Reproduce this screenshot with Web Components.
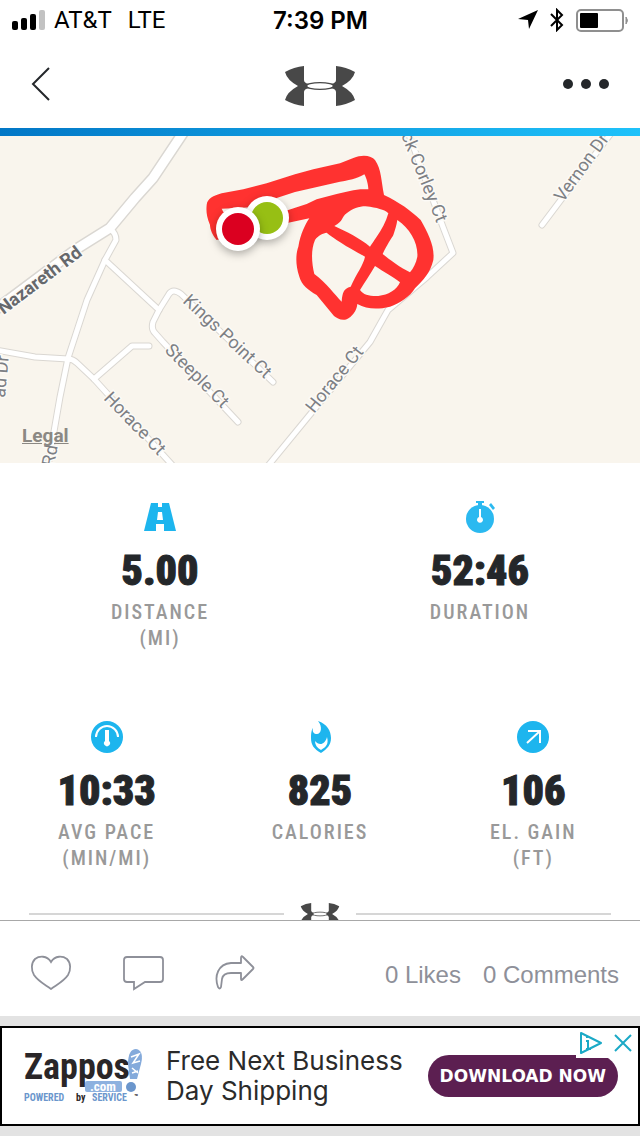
<!DOCTYPE html>
<html lang="en">
<head>
<meta charset="utf-8">
<meta name="viewport" content="width=device-width, initial-scale=1">
<title>Workout</title>
<style>
  body {
    margin: 0;
    background: #E3E3E3;
    color: #24272A;
    font-family: Roboto, 'Liberation Sans', sans-serif;
  }
</style>
</head>
<body>
<workout-screen></workout-screen>

<script>
const ICONS = {
  back: ['0 0 20 36', `<path d="M18 2 2 18l16 16" fill="none" stroke="#24272A" stroke-width="2"/>`],
  more: ['0 0 46 10', `<g fill="#24272A"><circle cx="5" cy="5" r="5"/><circle cx="23" cy="5" r="5"/><circle cx="41" cy="5" r="5"/></g>`],
  brand: ['0 0 70 40', `
    <g fill="#484848">
      <path d="M0 6Q9 1 19 0V14Q19 17 24 18L22 20 24 22Q19 23 19 26V40Q9 39 0 34Q2 26 13 20Q2 14 0 6Z"/>
      <path d="M70 6Q61 1 51 0V14Q51 17 46 18L48 20 46 22Q51 23 51 26V40Q61 39 70 34Q68 26 57 20Q68 14 70 6Z"/>
    </g>
    <ellipse cx="35" cy="20" rx="14" ry="3.4" fill="none" stroke="#484848" stroke-width="1.4"/>`],
  signal: ['0 0 34 20', `<rect y="11" width="6" height="9" rx="2"/><rect x="9" y="8" width="6" height="12" rx="2"/><rect x="18" y="4" width="6" height="16" rx="2"/><rect x="27" width="6" height="20" rx="2" fill="#C2C2C2"/>`],
  location: ['0 0 20 20', `<path d="M20 0 11 19 10 10 0 9Z"/>`],
  bluetooth: ['0 0 14 24', `<path d="M1 6 12 17 7 22V2l5 5L1 18" fill="none" stroke="#000" stroke-width="2"/>`],
  battery: ['0 0 53 23', `<rect x="1" y="1" width="46" height="21" rx="4" fill="none" stroke="#8F8F8F" stroke-width="2"/><rect x="4" y="4" width="18" height="15" rx="1"/><path d="M50 8q3 3.500 0 7z" fill="#8F8F8F" stroke="#8F8F8F"/>`],
  distance: ['0 0 32 32', `<path d="M7 2H14V6H18V2H25L32 30H20V23H12V30H0ZM14 11 13 19H19L18 11Z" fill="#1DB5EE" fill-rule="evenodd"/>`],
  duration: ['0 0 32 32', `
    <g fill="#2BB9F0"><circle cx="16" cy="18" r="14"/><rect x="12" width="8" height="2"/><rect x="14" y="1" width="4" height="5"/><path d="M25 4 27 2 31 7 29 9Z"/></g>
    <path d="M15 8h2v8a3 3 0 1 1-2 0z" fill="#fff"/>`],
  pace: ['0 0 32 32', `<circle cx="16" cy="16" r="16" fill="#1DB5EE"/><path d="M5 16a11 11 0 0 1 22 0" fill="none" stroke="#fff" stroke-width="2"/><path d="M14 9h4v11a3 3 0 1 1-4 0z" fill="#fff"/>`],
  calories: ['0 0 32 32', `
    <path d="M14 0C23 3 27 10 27 17C27 24 23 28 17 32C10 28 7 24 7 17C7 11 8 8 9 7C8 11 10 13 13 13C17 13 19 6 14 0Z" fill="#1DB5EE"/>
    <path d="M11 20C15 25 21 24 23 16C25 23 22 26 17 29C13 27 11 24 11 20Z" fill="#fff"/>`],
  gain: ['0 0 32 32', `<circle cx="16" cy="16" r="16" fill="#1DB5EE"/><path d="M10 22 23 10M11 10H23V22" fill="none" stroke="#fff" stroke-width="2"/>`],
  like: ['0 0 42 36', `<path d="M21 7C17 0 9 1 5 4C1 8 1 15 4 20C8 26 14 29 21 34C28 29 34 26 38 20C41 15 41 8 37 4C33 1 25 0 21 7Z" fill="none" stroke="#8E9099" stroke-width="1.800"/>`],
  comment: ['0 0 42 36', `<path d="M5 2H38Q41 2 41 5V24Q41 27 38 27H23L12 34V27H5Q2 27 2 24V5Q2 2 5 2Z" fill="none" stroke="#8E9099" stroke-width="1.800"/>`],
  share: ['0 0 42 36', `<path d="M27 3Q27 0 29 2L39 12Q40 13 39 14L29 24Q27 26 27 24V18H17Q9 18 8 24L7 32Q6 35 4 32C0 21 4 9 17 8H27Z" fill="none" stroke="#8E9099" stroke-width="1.800" stroke-linejoin="round"/>`],
  adchoices: ['0 0 24 24', `<path d="M2 2 22 12 2 22Z" fill="none" stroke="#1BA9C6" stroke-width="2" stroke-linejoin="round"/><path d="M7 10h2v8M7 18h5M8 5v2" fill="none" stroke="#1BA9C6" stroke-width="2"/>`],
  close: ['0 0 20 20', `<path d="M2 2 18 18M18 2 2 18" fill="none" stroke="#1BA9C6" stroke-width="2"/>`],
}

class AppIcon extends HTMLElement {
  connectedCallback() {
    const [box, art] = ICONS[this.getAttribute('name')]
    this.attachShadow({ mode: 'open' }).innerHTML = `
      <style>
        :host { display: inline-block; flex: none; }
        svg { display: block; width: 100%; height: 100%; }
      </style>
      <svg viewBox="${box}" aria-hidden="true">${art}</svg>
    `
  }
}

class StatusBar extends HTMLElement {
  connectedCallback() {
    this.attachShadow({ mode: 'open' }).innerHTML = `
      <style>
        :host {
          display: grid;
          grid-template-columns: 1fr auto 1fr;
          align-items: center;
          height: 40px;
          padding: 0 11px 0 12px;
          color: #000;
          font-size: 24px;
        }
        .side { display: flex; align-items: center; gap: 8px; }
        .side.right { justify-content: flex-end; gap: 12px; }
        .net { margin-left: 8px; }
        .time { font: 600 24px Inter, sans-serif; }
        [name=signal] { width: 34px; height: 20px; }
        [name=location] { width: 20px; height: 20px; }
        [name=bluetooth] { width: 14px; height: 24px; }
        [name=battery] { width: 53px; height: 23px; }
      </style>
      <div class="side">
        <app-icon name="signal"></app-icon>
        <span>AT&amp;T</span><span class="net">LTE</span>
      </div>
      <span class="time">7:39 PM</span>
      <div class="side right">
        <app-icon name="location"></app-icon>
        <app-icon name="bluetooth"></app-icon>
        <app-icon name="battery"></app-icon>
      </div>
    `
  }
}

class NavBar extends HTMLElement {
  connectedCallback() {
    this.attachShadow({ mode: 'open' }).innerHTML = `
      <style>
        :host {
          display: grid;
          grid-template-columns: 1fr auto 1fr;
          align-items: center;
          height: 88px;
          padding: 0 31px;
          border-bottom: 8px solid;
          border-image: linear-gradient(90deg, #0277C6, #1FC2FA) 1;
        }
        button { border: 0; padding: 0; background: none; display: flex; cursor: pointer; }
        .more { justify-self: end; }
        [name=back] { width: 20px; height: 36px; }
        [name=brand] { width: 70px; height: 40px; padding-top: 4px; }
        [name=more] { width: 46px; height: 10px; }
      </style>
      <button aria-label="Back"><app-icon name="back"></app-icon></button>
      <app-icon name="brand"></app-icon>
      <button class="more" aria-label="More"><app-icon name="more"></app-icon></button>
    `
  }
}

class RouteMap extends HTMLElement {
  connectedCallback() {
    const minor = `
      <path d="M110 93Q116 97 116 104L105 124 87 164 68 222 60 261 52 307 48 330"/>
      <path d="M105 124 159 174"/>
      <path d="M273 246 181 158Q173 152 169 158L159 174 153 186Q151 193 155 197L163 206 238 286"/>
      <path d="M-4 214 35 221 68 223Q73 223 77 227L94 243 174 331"/>
      <path d="M94 243 132 210 149 210"/>
      <path d="M267 331 308 281 370 206 388 174 427 141 453 117 443 91 408 -4"/>
      <path d="M542 89 612 -4"/>
    `
    const major = `<path d="M185 -6 153 42 135 62 110 92 78 112 -5 174"/>`
    this.attachShadow({ mode: 'open' }).innerHTML = `
      <style>
        :host { display: block; position: relative; background: #F9F5ED; }
        .map { display: block; width: 100%; overflow: hidden; }
        .roads { fill: none; stroke-linecap: round; stroke-linejoin: round; }
        text {
          font: 18px Roboto, sans-serif;
          fill: #7D7F84;
          stroke: #FCFAF6;
          stroke-width: 3px;
          paint-order: stroke;
        }
        .bold { font-weight: 700; fill: #66686C; }
        .pin { fill: #fff; filter: drop-shadow(0 3px 4px rgba(0, 0, 0, 0.3)); }
        a {
          position: absolute;
          left: 22px;
          bottom: 16px;
          color: #8B8883;
          font: 700 19px/22px Roboto, sans-serif;
        }
      </style>
      <svg class="map" viewBox="0 0 640 327" role="img" aria-label="Route map">
        <g class="roads">
          <g stroke="#DAD7D2" stroke-width="7">${minor}</g>
          <g stroke="#DAD7D2" stroke-width="12">${major}</g>
          <g stroke="#fff" stroke-width="5">${minor}</g>
          <g stroke="#fff" stroke-width="9">${major}</g>
        </g>
        <text class="bold" text-anchor="end" transform="translate(83 119) rotate(-37)">Nazareth Rd</text>
        <text transform="translate(182 166) rotate(43)">Kings Point Ct</text>
        <text transform="translate(164 215) rotate(45)">Steeple Ct</text>
        <text transform="translate(103 263) rotate(46)">Horace Ct</text>
        <text transform="translate(314 278) rotate(-51)">Horace Ct</text>
        <text transform="translate(401 -1) rotate(68)">ck Corley Ct</text>
        <text transform="translate(563 67) rotate(-54)">Vernon Dr</text>
        <text transform="translate(5 262) rotate(-85)">ad Dr</text>
        <text transform="translate(54 331) rotate(-80)">Rd</text>
        <!-- hand-drawn route, in its own finer grid -->
        <svg x="180" y="-6" width="460" height="340" viewBox="0 0 1380 1020">
          <path fill="#FF3230" fill-rule="evenodd" d="
            M80 225C82 205 100 198 125 190L190 178 260 160 345 133 400 118 480 100 520 84C550 72 575 78 585 90C605 120 603 150 612 195C660 218 690 240 722 270C745 310 765 350 760 390C750 430 730 450 705 475C690 500 660 520 630 530C590 540 560 537 532 522C530 545 515 560 500 568C485 573 470 565 462 558L410 495C385 480 365 465 358 440C345 400 348 370 355 350C362 310 375 285 388 265L325 278 110 330C92 310 90 290 90 285C80 260 78 245 80 225Z
            M125 236 215 232 290 204 345 186 480 155C520 150 540 140 553 133C560 145 565 165 565 178C530 175 500 185 470 192L410 208 380 222 325 240 180 270 130 246Z
            M463 288C490 275 485 260 500 250C520 232 550 225 570 230C600 235 620 242 625 250C618 275 605 300 590 320C580 335 575 342 570 350C540 325 500 305 463 288Z
            M440 308C460 325 500 350 555 380C550 405 530 430 512 470C490 475 487 490 485 515C465 495 440 460 403 432C395 400 392 360 405 330C415 315 430 310 440 308Z
            M652 270C690 295 715 340 712 380C708 400 700 415 690 427C660 412 630 390 608 372C620 345 635 325 640 315C645 300 650 285 652 270Z
            M585 408C610 425 640 440 660 457C650 480 625 495 595 498C570 499 550 495 540 480C555 455 570 435 585 408Z"/>
        </svg>
        <circle class="pin" cx="267" cy="82" r="22"/><circle cx="267" cy="82" r="16" fill="#97BF14"/>
        <circle class="pin" cx="238" cy="93" r="22"/><circle cx="238" cy="93" r="16" fill="#DB0020"/>
      </svg>
      <a href="#legal">Legal</a>
    `
  }
}

class StatTile extends HTMLElement {
  connectedCallback() {
    this.attachShadow({ mode: 'open' }).innerHTML = `
      <style>
        :host { display: block; flex: 1; min-height: 150px; text-align: center; }
        app-icon { width: 32px; height: 32px; vertical-align: top; }
        .value {
          margin-top: 14px;
          font: 900 42px/48px 'Roboto Condensed', Roboto, sans-serif;
          -webkit-text-stroke: 1px #24272A;
        }
        .label {
          margin-top: 4px;
          color: #999;
          font: 500 20px/26px 'Roboto Condensed', Roboto, sans-serif;
          letter-spacing: 2px;
        }
      </style>
      <app-icon name="${this.getAttribute('icon')}"></app-icon>
      <div class="value"><slot name="value"></slot></div>
      <div class="label"><slot></slot></div>
    `
  }
}

class BrandDivider extends HTMLElement {
  connectedCallback() {
    this.attachShadow({ mode: 'open' }).innerHTML = `
      <style>
        :host { display: flex; align-items: center; gap: 16px; padding: 0 29px; }
        hr { flex: 1; height: 2px; margin: 0; border: 0; background: #D6D6D6; }
        app-icon { width: 40px; height: 22px; }
      </style>
      <hr><app-icon name="brand"></app-icon><hr>
    `
  }
}

class SocialBar extends HTMLElement {
  connectedCallback() {
    this.attachShadow({ mode: 'open' }).innerHTML = `
      <style>
        :host {
          display: flex;
          align-items: center;
          justify-content: space-between;
          height: 87px;
          padding: 8px 21px 0 30px;
          border-top: 1px solid #A8A8A8;
          background: #fff;
          color: #8E9099;
          font: 24px 'Liberation Sans', sans-serif;
        }
        .actions { display: flex; gap: 50px; }
        .counts { display: flex; gap: 22px; padding-top: 4px; }
        button { border: 0; padding: 0; background: none; display: flex; cursor: pointer; }
        app-icon { width: 42px; height: 36px; }
        a { color: inherit; text-decoration: none; }
      </style>
      <div class="actions">
        <button aria-label="Like"><app-icon name="like"></app-icon></button>
        <button aria-label="Comment"><app-icon name="comment"></app-icon></button>
        <button aria-label="Share"><app-icon name="share"></app-icon></button>
      </div>
      <div class="counts">
        <a href="#likes">0 Likes</a>
        <a href="#comments">0 Comments</a>
      </div>
    `
  }
}

class AdBanner extends HTMLElement {
  connectedCallback() {
    this.attachShadow({ mode: 'open' }).innerHTML = `
      <style>
        :host {
          display: flex;
          align-items: center;
          position: relative;
          box-sizing: border-box;
          height: 100px;
          margin: 10px 0;
          padding: 0 20px;
          border: 2px solid #000;
          background: #fff;
        }
        .logo { flex: none; width: 124px; height: 60px; margin-right: 20px; }
        .logo text { font-family: 'Roboto Condensed', Roboto, sans-serif; font-weight: 700; }
        p {
          flex: 1;
          margin: 0;
          color: #2B2B2B;
          font: 26px/30px Inter, sans-serif;
          white-space: nowrap;
        }
        .cta {
          padding: 0 12px;
          border-radius: 21px;
          background: #5C1F51;
          color: #fff;
          font: 700 17px/42px 'DejaVu Sans', sans-serif;
          text-decoration: none;
          white-space: nowrap;
        }
        /* sits over the banner's corner */
        .choices {
          position: absolute;
          top: 0;
          right: 0;
          display: flex;
          align-items: center;
          gap: 10px;
          height: 30px;
          padding: 0 5px 0 3px;
          background: #fff;
        }
        button { border: 0; padding: 0; background: none; display: flex; cursor: pointer; }
        [name=adchoices] { width: 24px; height: 24px; }
        [name=close] { width: 20px; height: 20px; }
      </style>
      <svg class="logo" viewBox="0 0 124 60" role="img" aria-label="Zappos.com">
        <text x="2" y="33" font-size="36" fill="#2A2628">Zappos</text>
        <rect x="63" y="35" width="37" height="11" rx="2" fill="#8DB1DF"/>
        <text x="68" y="45" font-size="13" fill="#fff">.com</text>
        <path d="M108 33 106 18C106 8 109 3 114 3C120 4 121 10 119 18L115 33Z" fill="#84AADB"/>
        <path d="M109 11l8-3-6 9 7-2M110 22l6 5M110 27l6-2" fill="none" stroke="#fff" stroke-width="1.500"/>
        <circle cx="109" cy="41" r="5" fill="#6B96CC"/>
        <g font-size="10">
          <text x="2" y="55" fill="#6B96CC">POWERED</text>
          <text x="54" y="55" fill="#2A2628">by</text>
          <text x="70" y="55" fill="#6B96CC">SERVICE</text>
        </g>
        <text x="112" y="53" font-size="7" fill="#2A2628">™</text>
      </svg>
      <p>Free Next Business<br>Day Shipping</p>
      <a class="cta" href="#download">DOWNLOAD NOW</a>
      <div class="choices">
        <button aria-label="AdChoices"><app-icon name="adchoices"></app-icon></button>
        <button aria-label="Close ad"><app-icon name="close"></app-icon></button>
      </div>
    `
  }
}

class WorkoutScreen extends HTMLElement {
  connectedCallback() {
    this.attachShadow({ mode: 'open' }).innerHTML = `
      <style>
        :host { display: flex; flex-direction: column; height: 100vh; }
        header, main { background: #fff; }
        main { flex: 1; min-height: 0; overflow: hidden; }
        .stats { display: flex; flex-direction: column; gap: 70px; padding: 38px 0 32px; }
        .row { display: flex; }
      </style>
      <header>
        <status-bar></status-bar>
        <nav-bar></nav-bar>
      </header>
      <main>
        <route-map></route-map>
        <div class="stats">
          <div class="row">
            <stat-tile icon="distance"><span slot="value">5.00</span>DISTANCE<br>(MI)</stat-tile>
            <stat-tile icon="duration"><span slot="value">52:46</span>DURATION</stat-tile>
          </div>
          <div class="row">
            <stat-tile icon="pace"><span slot="value">10:33</span>AVG PACE<br>(MIN/MI)</stat-tile>
            <stat-tile icon="calories"><span slot="value">825</span>CALORIES</stat-tile>
            <stat-tile icon="gain"><span slot="value">106</span>EL. GAIN<br>(FT)</stat-tile>
          </div>
        </div>
        <brand-divider></brand-divider>
      </main>
      <social-bar></social-bar>
      <ad-banner></ad-banner>
    `
  }
}

customElements.define('app-icon', AppIcon)
customElements.define('status-bar', StatusBar)
customElements.define('nav-bar', NavBar)
customElements.define('route-map', RouteMap)
customElements.define('stat-tile', StatTile)
customElements.define('brand-divider', BrandDivider)
customElements.define('social-bar', SocialBar)
customElements.define('ad-banner', AdBanner)
customElements.define('workout-screen', WorkoutScreen)
</script>
</body>
</html>
